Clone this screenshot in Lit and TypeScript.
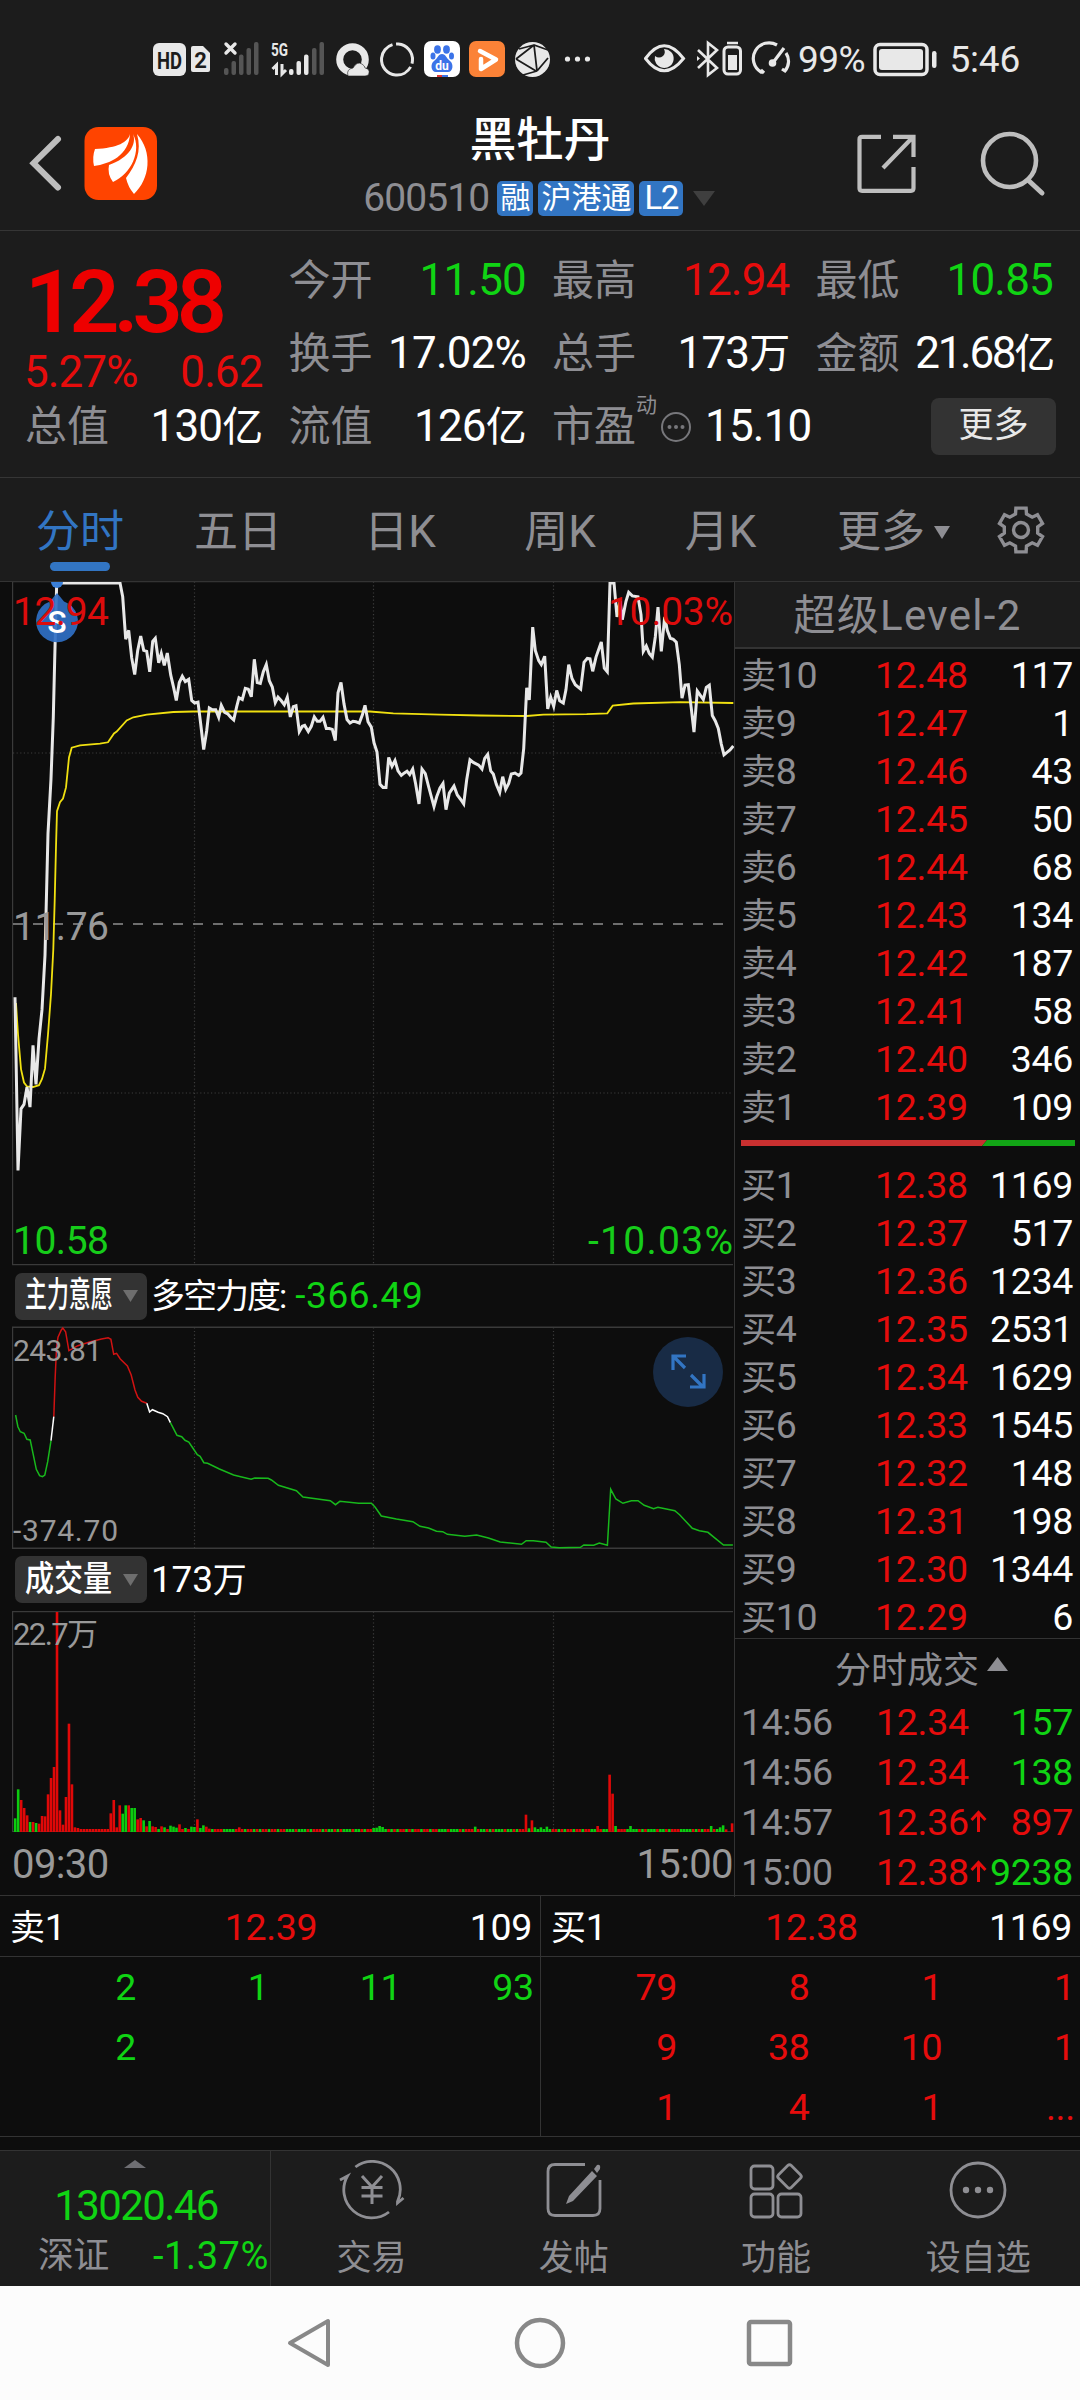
import { LitElement, html, svg, css } from "lit";
import { customElement } from "lit/decorators.js";

type Pair = [number, number];

const parse = (s: string): Pair[] =>
  s.trim().split(/\s+/).map((p) => p.split(",").map(Number) as Pair);

/* Series are stored as integers; each panel gives its own scale and origin. */
const path = (s: string, kx: number, ky: number, dx: number, dy: number) =>
  parse(s).map(([x, y]) => `${(x / kx + dx).toFixed(1)},${(y / ky + dy).toFixed(1)}`).join(" ");

const PRICE = `45,957 54,1345 63,1207 72,1197 81,1158 90,1203 99,1065 108,1152 117,1050 126,985 135,863 144,590 153,468 160,330 164,200 170,29
360,29 368,60 377,155 386,135 395,197 404,234 413,180 422,148 431,180 440,182 449,228 458,160 466,153 476,208 484,187 493,214 502,186 512,235
521,264 529,292 538,252 547,238 556,250 566,245 575,292 584,298 594,296 602,345 611,402 620,360 628,309 637,313 647,313 656,330 664,303
674,319 683,322 692,330 701,336 710,306 717,286 727,290 736,265 745,267 754,284 763,200 772,252 781,254 790,228 799,212 808,248 817,262
826,297 834,285 844,293 853,302 862,285 871,329 880,306 888,304 898,362 907,350 914,348 925,362 934,350 943,329 952,339 960,339 969,330
979,355 988,355 997,357 1006,382 1014,275 1023,252 1032,300 1041,335 1050,343 1059,339 1068,340 1078,343 1087,325 1095,303 1104,340
1114,352 1122,387 1131,408 1140,480 1149,487 1158,487 1166,420 1176,440 1185,427 1194,450 1204,460 1212,455 1221,451 1229,458 1238,446
1247,480 1257,524 1266,446 1276,456 1286,486 1302,530 1310,508 1320,488 1329,478 1338,537 1348,500 1362,484 1372,504 1382,514 1391,524
1400,470 1410,425 1420,431 1436,437 1446,446 1454,422 1463,413 1472,450 1480,457 1489,480 1499,498 1508,463 1517,491 1526,478 1534,457
1545,455 1556,460 1563,455 1571,400 1580,264 1588,291 1598,128 1606,180 1616,203 1624,212 1634,193 1643,311 1652,285 1661,305 1670,270
1679,293 1690,298 1698,268 1706,212 1716,243 1726,257 1742,267 1752,207 1762,198 1770,199 1778,227 1788,195 1804,161 1813,220 1822,228
1830,29 1842,29 1851,105 1860,70 1867,111 1878,70 1886,50 1897,58 1914,60 1923,100 1930,182 1939,170 1948,187 1957,195 1966,150 1974,83
1984,182 1994,105 2002,135 2011,153 2020,155 2029,162 2038,212 2046,287 2055,258 2065,257 2074,310 2082,363 2092,271 2102,282 2110,290
2119,263 2128,258 2137,326 2146,338 2155,355 2164,390 2172,414 2182,408 2190,403 2200,394`;

const AVERAGE = `48,970 54,1040 63,1118 72,1148 81,1157 99,1158 117,1154 126,1140 135,1117 144,1040 153,950 160,850 164,740 168,620 171,540
180,520 189,512 198,487 207,420 215,398 240,393 300,389 324,386 342,366 350,362 380,337 400,330 440,324 520,318 580,317 1110,317 1180,321
1320,324 1440,326 1580,327 1630,324 1760,323 1822,321 1838,304 1900,299 2040,296 2200,298`;

const FORCE: Array<[string, string]> = [
  ["up", "114,470 117,350 120,260 123,232 130,210 133,204 139,215 146,272 165,257 190,246 215,237 229,233 235,238 241,283 247,280 255,297 270,318 278,345 286,390 292,412 300,424 311,430"],
  ["down", "33,465 38,500 43,515 51,520 57,538 64,540 70,580 77,628 84,647 90,650 95,645 101,605 108,542"],
  ["even", "108,542 114,470"],
  ["even", "311,430 317,456 323,449 335,457 345,461 355,470 361,488"],
  ["down", `361,488 375,526 385,530 392,541 400,546 410,567 418,584 424,589 432,608 440,610 465,627 495,645 510,650 532,658 540,654 568,655
575,660 590,676 628,692 642,711 700,722 711,734 720,724 760,730 787,730 795,742 808,768 840,777 875,785 890,799 908,804 925,814 938,815
948,823 985,829 1010,825 1035,834 1060,846 1105,853 1115,842 1130,842 1157,847 1168,861 1185,863 1230,862 1237,855 1258,856 1270,849
1287,856 1294,688 1305,717 1320,730 1338,722 1352,722 1365,736 1385,746 1394,742 1430,752 1440,764 1467,805 1482,812 1500,817 1533,855 1553,855`],
];

/* Opening minutes in full, then only the minutes that stand out. */
const OPENING = `g41 g128 r96 r72 r50 g30 r30 g27 r25 r48 r47 r113 r162 r195 r660 r65 r22 r105 r325 r143 r14 r12 r9 r9 r9 r9 r9 r9 r9 r9 r9 r9
r56 r96 r14 r80 g55 g80 r80 g72 g72 r38 r42 g35 r17 g33 r17 r15 g9 r17 g14 r9 g19 g16 g13 r23 r9 g12 r9 g16 g15 r38 g12 g20 r16 r10`.split(/\s+/);
const PEAKS: Record<number, string> = {
  75: "r14", 120: "g12", 121: "g13", 122: "g18", 123: "g15", 154: "g16", 171: "r52", 172: "g11", 173: "r35", 174: "g14",
  176: "g14", 178: "g16", 195: "r18", 199: "r172", 200: "r115", 201: "g18", 206: "g18", 233: "g18", 236: "g14", 237: "g20", 238: "r8", 239: "r0", 240: "r26",
};
const QUIET = "rgrggrgrgggrggrgrrrggggrgrgrrgrgrrgrrgrrgggrgggrgrr";
const VOLUME = Array.from({ length: 241 }, (_, i) => OPENING[i] ?? PEAKS[i] ?? QUIET[i % QUIET.length] + "9");

const SELL = [["卖10", "12.48", "117"], ["卖9", "12.47", "1"], ["卖8", "12.46", "43"], ["卖7", "12.45", "50"], ["卖6", "12.44", "68"],
  ["卖5", "12.43", "134"], ["卖4", "12.42", "187"], ["卖3", "12.41", "58"], ["卖2", "12.40", "346"], ["卖1", "12.39", "109"]];
const BUY = [["买1", "12.38", "1169"], ["买2", "12.37", "517"], ["买3", "12.36", "1234"], ["买4", "12.35", "2531"], ["买5", "12.34", "1629"],
  ["买6", "12.33", "1545"], ["买7", "12.32", "148"], ["买8", "12.31", "198"], ["买9", "12.30", "1344"], ["买10", "12.29", "6"]];
const TICKS = [["14:56", "12.34", "", "157", "down"], ["14:56", "12.34", "", "138", "down"], ["14:57", "12.36", "1", "897", "up"], ["15:00", "12.38", "1", "9238", "down"]];

const base = css`
  :host { display: block; font-family: Roboto, "Noto Sans CJK SC", sans-serif; color: #fff; }
  * { box-sizing: border-box; }
  svg { display: block; flex: none; }
  .up { color: #e60c0c; }
  .down { color: #10d414; }
  .muted { color: #8e8e93; }
`;

@customElement("status-bar")
class StatusBar extends LitElement {
  static styles = [base, css`
    .bar { display: flex; align-items: center; height: 100px; padding: 18px 60px 0 153px; color: #e8e8e8; font-size: 37px; }
    .alerts { margin-right: 54px; }
    .pct { width: 75px; padding-left: 4px; letter-spacing: -0.6px; }
    .clock { padding-left: 12px; letter-spacing: -0.2px; }
  `];
  render() {
    return html`<div class="bar">
      <svg class="alerts" width="437" height="40" viewBox="153 39 437 40" fill="#e8e8e8">
        <rect x="153" y="43" width="33" height="33" rx="6"/>
        <text x="169.500" y="68.500" font-size="23" font-weight="700" text-anchor="middle" fill="#1c1c1c" textLength="25" lengthAdjust="spacingAndGlyphs">HD</text>
        <path d="M193 46h10l7 7v17q0 2-2 2h-15q-2 0-2-2v-22q0-2 2-2z"/>
        <text x="200.500" y="68" font-size="22" font-weight="700" text-anchor="middle" fill="#1c1c1c">2</text>
        <path d="M226 44l9 9m0-9l-9 9" stroke="#e8e8e8" stroke-width="3.400" stroke-linecap="round"/>
        <g fill="#555"><rect x="224" y="68" width="4.500" height="7" rx="2"/><rect x="231.500" y="61" width="4.500" height="14" rx="2"/><rect x="239" y="54.500" width="4.500" height="20.500" rx="2"/><rect x="246.500" y="48" width="4.500" height="27" rx="2"/><rect x="254" y="42" width="4.500" height="33" rx="2"/></g>
        <text x="271" y="56" font-size="19" font-weight="700" textLength="17" lengthAdjust="spacingAndGlyphs">5G</text>
        <path d="M276.500 75V65l-4 4M282 64v10l4-4" fill="none" stroke="#e8e8e8" stroke-width="3"/>
        <rect x="289" y="69" width="4.500" height="6" rx="2"/><rect x="296.500" y="61" width="4.500" height="14" rx="2"/><rect x="304" y="54.500" width="4.500" height="20.500" rx="2"/>
        <g fill="#555"><rect x="312" y="48" width="4.500" height="27" rx="2"/><rect x="319.500" y="42" width="4.500" height="33" rx="2"/></g>
        <circle cx="352.500" cy="59.500" r="12.800" fill="none" stroke="#e8e8e8" stroke-width="7"/>
        <path d="M348 76q-2-7 5-8 4-7 9-4 3 2 3 4 5 1 4 5 0 3-4 3z" stroke="#1c1c1c" stroke-width="0.600"/>
        <circle cx="397" cy="59.500" r="15.500" fill="none" stroke="#e8e8e8" stroke-width="3" stroke-dasharray="27 3.500 60.400 3.500 3 0" transform="rotate(-85 397 59.500)"/>
        <rect x="424" y="41" width="36" height="36" rx="7" fill="#fff"/>
        <g fill="#3b73e8"><ellipse cx="437.500" cy="49.500" rx="3.400" ry="4.200"/><ellipse cx="446.500" cy="49.500" rx="3.400" ry="4.200"/><ellipse cx="433" cy="56" rx="2.500" ry="3.500"/><ellipse cx="451.500" cy="56" rx="2.500" ry="3.500"/><path d="M442 54c4 0 4 4 8 7s3 11-2 11h-12c-5 0-6-8-2-11s4-7 8-7z"/></g>
        <text x="442" y="70" font-size="12" font-weight="700" fill="#fff" text-anchor="middle">du</text>
        <path d="M437 75h5v2h-5z" fill="#d33"/><path d="M442 75h6v2h-6z" fill="#3b73e8"/>
        <rect x="469" y="41" width="36" height="36" rx="7" fill="#fb8237"/>
        <path d="M480 51l16 8.500-15 9.500V59" fill="none" stroke="#fff" stroke-width="4.500" stroke-linejoin="round" stroke-linecap="round"/>
        <circle cx="532.500" cy="59.500" r="17.500"/>
        <path d="M516 59l18-14 14 5m-32 9l20 12m-2-26l3 26m11-13l-11 13m-14 4l14-4M519 49l15-4" stroke="#1c1c1c" stroke-width="1.800" fill="none"/>
        <circle cx="567.500" cy="59" r="2.600"/><circle cx="577.500" cy="59" r="2.600"/><circle cx="587.500" cy="59" r="2.600"/>
      </svg>
      <svg width="150" height="40" viewBox="644 39 150 40" fill="none" stroke="#e8e8e8" stroke-width="3">
        <path d="M645.500 58.500Q664 33 683.500 58.500 664 83 645.500 58.500z"/>
        <path d="M664 49a9.500 9.500 0 1 1-9 7q4 3 8 0 3-3 1-7z" fill="#e8e8e8" stroke="none"/>
        <path d="M698 50l19 18-9 7V43l9 7-19 18" stroke-width="2.600"/>
        <path d="M697 56l3 2.500-3 2.500z" fill="#e8e8e8" stroke="none"/>
        <rect x="724" y="47" width="16.500" height="27" rx="4"/><path d="M727 43h11" stroke-width="2.500"/><path d="M728 55h9v15h-9z" fill="#e8e8e8" stroke="none"/>
        <path d="M764 73l-2-2-1 1A15 15 0 0 1 777 45M786 53a15 15 0 0 1-1 18l-3-2M772 64l12-16" stroke-width="3.200"/><circle cx="772.500" cy="63" r="3.800" fill="#e8e8e8" stroke="none"/>
      </svg>
      <span class="pct">99%</span>
      <svg width="70" height="40" viewBox="868 39 70 40"><rect x="876" y="44.500" width="52" height="30" rx="5" fill="none" stroke="#e8e8e8" stroke-width="3.500"/><rect x="880" y="49" width="44" height="21" rx="3" fill="#e8e8e8"/><rect x="933" y="51" width="4.500" height="17" rx="2.200" fill="#e8e8e8"/></svg>
      <span class="clock">5:46</span>
    </div>`;
  }
}

@customElement("stock-header")
class StockHeader extends LitElement {
  static styles = [base, css`
    .head { display: flex; height: 131px; border-bottom: 1px solid #353535; }
    .side { width: 330px; padding: 24px 0 0 27px; }
    .mid { flex: 1; display: flex; flex-direction: column; align-items: center; }
    .name { height: 78px; line-height: 78px; font-size: 47px; font-weight: 500; padding-top: 1px; }
    .code { display: flex; align-items: center; height: 40px; margin-left: -2px; }
    .num { font-size: 39px; letter-spacing: -0.9px; margin-right: 8px; }
    .tag { height: 35px; line-height: 34px; border-radius: 5px; background: #3275c3; margin-right: 5px; padding: 0 3px; font-size: 30px; }
    .l2 { padding: 0 5px; font-size: 33px; letter-spacing: -1.5px; margin-right: 10px; }
    .right { width: 330px; padding: 30px 0 0 104px; }
  `];
  render() {
    return html`<div class="head">
      <div class="side"><svg width="134" height="80" viewBox="27 124 134 80">
        <path d="M58 139L33.500 163.200 58 187.500" fill="none" stroke="#bebebe" stroke-width="6" stroke-linecap="round"/>
        <rect x="84.500" y="127" width="72.500" height="73" rx="14" fill="#ff4400"/>
        <g fill="#fff"><path d="M130 134C128 142 118 148 95 149q-3 8-1 17c16-2 35-11 36-32z"/><path d="M133 134c4 10-4 24-24 31q-2 9 4 17c18-8 29-31 20-48z"/><path d="M137 134c5 17-1 31-11 44q2 9 8 16c16-15 19-42 3-60z"/></g>
      </svg></div>
      <div class="mid">
        <div class="name">黑牡丹</div>
        <div class="code"><span class="num muted">600510</span><span class="tag">融</span><span class="tag">沪港通</span><span class="tag l2">L2</span>
          <svg width="22" height="15" viewBox="0 0 22 15"><path d="M0 0h22L11 15z" fill="#3f3f3f"/></svg></div>
      </div>
      <div class="right"><svg width="196" height="68" viewBox="854 130 196 68" fill="none" stroke="#bebebe" stroke-width="4.200">
        <path d="M881 136.800h-19q-2.500 0-2.500 2.500v49q0 2.500 2.500 2.500h49q2.500 0 2.500-2.500V167M893 136.800h20.500V157M912 138L883 168"/>
        <circle cx="1009.500" cy="160.500" r="26.500" stroke-width="4.600"/><path d="M1028 180l14 13" stroke-width="5" stroke-linecap="round"/>
      </svg></div>
    </div>`;
  }
}

@customElement("quote-stats")
class QuoteStats extends LitElement {
  static styles = [base, css`
    .grid { display: grid; grid-template-columns: repeat(4, 236.500px); grid-auto-rows: 73px; column-gap: 27px; height: 247px; padding: 12.500px 0 0 26px; border-bottom: 1px solid #353535; font-size: 44px; line-height: 73px; }
    .main { grid-row: span 2; }
    .last { font-size: 88px; font-weight: 600; line-height: 115px; letter-spacing: -6px; color: #ee0000; margin-left: -1px; }
    .row { display: flex; justify-content: space-between; white-space: nowrap; }
    .chg { line-height: 26px; letter-spacing: -0.9px; margin-left: -2px; }
    .label { font-size: 42px; color: #8e8e93; margin-left: -1px; }
    .val { letter-spacing: -0.8px; }
    .tight { letter-spacing: -2.300px; }
    .val i { font-style: normal; font-size: 41px; }
    .pe { justify-content: flex-start; align-items: center; }
    .sup { font-size: 21px; line-height: 24px; align-self: flex-start; margin: 3px 3px 0 0; color: #8e8e93; }
    .q { margin: 1px 13px 0 0; }
    .more { justify-self: end; align-self: center; width: 125px; height: 57px; margin-right: -3px; border-radius: 8px; background: #333; font-size: 35px; line-height: 55px; text-align: center; color: #e8e8e8; }
  `];
  cell(label: string, value: string, unit = "", tone = "") {
    return html`<div class="row"><span class="label">${label}</span><span class="val ${tone}">${value}<i>${unit}</i></span></div>`;
  }
  render() {
    return html`<div class="grid">
      <div class="main"><div class="last">12.38</div><div class="row chg up"><span>5.27%</span><span>0.62</span></div></div>
      ${this.cell("今开", "11.50", "", "down")}${this.cell("最高", "12.94", "", "up")}${this.cell("最低", "10.85", "", "down")}
      ${this.cell("换手", "17.02%")}${this.cell("总手", "173", "万")}${this.cell("金额", "21.68", "亿", "tight")}
      ${this.cell("总值", "130", "亿")}${this.cell("流值", "126", "亿")}
      <div class="row pe"><span class="label">市盈</span><span class="sup">动</span>
        <svg class="q" width="32" height="32" viewBox="0 0 32 32"><circle cx="16" cy="16" r="14" fill="none" stroke="#77777b" stroke-width="2"/><g fill="#77777b"><circle cx="9.500" cy="16" r="2"/><circle cx="16" cy="16" r="2"/><circle cx="22.500" cy="16" r="2"/></g></svg>
        <span class="val">15.10</span></div>
      <div class="more">更多</div>
    </div>`;
  }
}

@customElement("period-tabs")
class PeriodTabs extends LitElement {
  static styles = [base, css`
    .tabs { display: grid; grid-template-columns: 157px 162px 162px 158px 163px 163px 1fr; height: 103px; padding-top: 17px; color: #8e8e93; font-size: 44px; line-height: 74px; }
    .tab { text-align: center; }
    .on { color: #3275c3; display: flex; flex-direction: column; align-items: center; margin-left: 3px; }
    .on::after { content: ""; width: 60px; height: 9px; margin-top: -7px; border-radius: 5px; background: #3275c3; }
    .drop { display: flex; align-items: center; height: 74px; padding-left: 35px; gap: 9px; }
    .gear { margin: 10px 0 0 31px; }
  `];
  render() {
    const teeth = Array.from({ length: 6 }, (_, i) => {
      const at = (deg: number, r: number) => {
        const a = ((i * 60 + deg - 90) * Math.PI) / 180;
        return `${(25 + r * Math.cos(a)).toFixed(1)},${(25 + r * Math.sin(a)).toFixed(1)}`;
      };
      return [at(-13, 22.5), at(13, 22.5), at(19, 17), at(41, 17)].join(" ");
    }).join(" ");
    return html`<div class="tabs">
      <div class="tab on">分时</div><div class="tab">五日</div><div class="tab">日K</div><div class="tab">周K</div><div class="tab">月K</div>
      <div class="drop">更多<svg width="16" height="13" viewBox="0 0 16 13"><path d="M0 0h16L8 13z" fill="#8e8e93"/></svg></div>
      <svg class="gear" width="50" height="50" viewBox="0 0 50 50" fill="none" stroke="#8e8e93" stroke-width="3.400"><polygon points=${teeth}/><circle cx="25" cy="25" r="7.500"/></svg>
    </div>`;
  }
}

@customElement("stock-charts")
class StockCharts extends LitElement {
  static styles = [base, css`
    .wrap { width: 734px; padding-left: 12px; }
    text { font-family: Roboto, "Noto Sans CJK SC", sans-serif; }
    .line { display: flex; align-items: center; height: 60px; padding-left: 3px; font-size: 37px; line-height: 46px; }
    .line.vol { height: 61px; padding-bottom: 2px; }
    .pick { display: flex; align-items: center; width: 132px; height: 47px; margin-right: 4px; border-radius: 7px; background: #333; padding: 0 9px 0 10px; font-size: 35px; font-weight: 500; }
    .pick span { display: block; width: 98px; white-space: nowrap; transform-origin: left center; }
    .narrow { transform: scaleX(0.625); }
    .mid { transform: scaleX(0.83); }
    .cn { font-size: 34px; letter-spacing: -2px; margin-right: 10px; }
    .val { letter-spacing: -0.2px; }
    .force { letter-spacing: 0.6px; }
    .val i { font-style: normal; font-size: 34px; }
    .axis { display: flex; justify-content: space-between; height: 63px; line-height: 66px; font-size: 40px; color: #999; letter-spacing: -0.6px; padding: 0 1px 0 0; }
    .dots { stroke: #3c3c3c; stroke-width: 1.200; stroke-dasharray: 1.200 2.400; }
    .s-up { stroke: #d01212; }
    .s-down { stroke: #18b81c; }
    .s-even { stroke: #fff; }
  `];
  frame(top: number, bottom: number) {
    return svg`<path d="M733 ${top}H12.500V${bottom}H733" fill="none" stroke="#3a3a3a" stroke-width="1.400"/>
      ${[194.5, 373.5, 553.5].map((x) => svg`<path class="dots" d="M${x} ${top}V${bottom}"/>`)}`;
  }
  pick(text: string, cls: string) {
    return html`<div class="pick"><span class=${cls}>${text}</span><svg width="15" height="12" viewBox="0 0 15 12"><path d="M0 0h15L7.500 12z" fill="#6e6e6e"/></svg></div>`;
  }
  render() {
    return html`<div class="wrap">
      <svg width="722" height="684" viewBox="12 582 722 684">
        ${this.frame(581.6, 1264.6)}
        <path class="dots" d="M13 753H733M13 1093H733"/>
        <path d="M13 924H733" stroke="#8e8e8e" stroke-width="1.600" stroke-dasharray="10 10"/>
        <polyline points=${path(AVERAGE, 3, 2.24, 0, 570)} fill="none" stroke="#f0e010" stroke-width="1.800"/>
        <polyline points=${path(PRICE, 3, 2.24, 0, 570)} fill="none" stroke="#e8e8e8" stroke-width="3"/>
        <circle cx="57" cy="582" r="6" fill="#3a7fd8"/>
        <path d="M57 593l7 8.500a21 21 0 1 1-14 0z" fill="#2f6fc4" fill-opacity="0.920"/>
        <text x="57" y="632.500" font-size="32" font-weight="500" fill="#fff" text-anchor="middle">S</text>
        <g font-size="39">
          <text x="13" y="624.500" fill="#dc0c0c" textLength="96">12.94</text>
          <text x="733" y="624.500" fill="#dc0c0c" text-anchor="end" textLength="125">10.03%</text>
          <text x="13" y="939.500" fill="#999" textLength="96">11.76</text>
          <text x="13" y="1254" fill="#16cc1a" textLength="96">10.58</text>
          <text x="733" y="1254" fill="#16cc1a" text-anchor="end" textLength="145">-10.03%</text>
        </g>
      </svg>
      <div class="line">${this.pick("主力意愿", "narrow")}<span class="cn">多空力度:</span><span class="force down">-366.49</span></div>
      <svg width="722" height="224" viewBox="12 1326 722 224">
        ${this.frame(1327.3, 1548.3)}
        <g fill="none" stroke-width="1.500">${FORCE.map(([c, s]) => svg`<polyline class="s-${c}" points=${path(s, 2.119, 3, 0, 1260)}/>`)}</g>
        <text x="13" y="1361" font-size="30" fill="#999" textLength="89">243.81</text>
        <text x="13" y="1541" font-size="30" fill="#999" textLength="105">-374.70</text>
        <circle cx="688" cy="1372" r="35" fill="#182b45"/>
        <path d="M685 1368l-12-12m13 0h-13v14M691 1375l12 12m-13 0h14v-13" fill="none" stroke="#3275c3" stroke-width="3.200"/>
      </svg>
      <div class="line vol">${this.pick("成交量", "mid")}<span class="val">173<i>万</i></span></div>
      <svg width="722" height="221" viewBox="12 1611 722 221">
        ${this.frame(1611.6, 1831.6)}
        ${VOLUME.map((v, i) => {
          const h = Number(v.slice(1)) / 3;
          return svg`<rect x=${13.9 + i * 2.987} y=${1832 - h} width="2.600" height=${h} fill=${v[0] === "r" ? "#e00808" : "#0ccc10"}/>`;
        })}
        <text x="13" y="1645" font-size="31" fill="#999" textLength="85">22.7万</text>
      </svg>
      <div class="axis"><span>09:30</span><span>15:00</span></div>
    </div>`;
  }
}

@customElement("order-book")
class OrderBook extends LitElement {
  static styles = [base, css`
    .book { width: 346px; border-left: 1px solid #333; }
    .title { height: 67px; line-height: 68px; border-bottom: 2px solid #333; background: #1c1c1c; color: #8e8e93; font-size: 42px; letter-spacing: 1.300px; text-align: center; }
    .rows { padding-top: 2px; }
    .row { display: grid; grid-template-columns: 134px 98px 1fr; height: 48px; line-height: 48px; padding: 0 7px 0 6px; font-size: 37.500px; letter-spacing: -0.3px; }
    .row span:last-child { text-align: right; }
    .row b { font-weight: 400; font-size: 35px; }
    .ratio { display: block; margin: 9px 0 15px 6px; }
    .deals { display: flex; justify-content: center; align-items: center; gap: 8px; height: 59px; margin-top: -3px; padding: 0 0 3px 28px; border-top: 1px solid #333; font-size: 36px; color: #8e8e93; }
    .deals svg { margin-bottom: 6px; }
    .tick { height: 50px; line-height: 50px; grid-template-columns: 135px 94px 18px 1fr; }
    .tick svg { margin-top: 13px; }
    .tick span:last-child { margin-left: -12px; }
  `];
  level = ([n, p, q]: string[]) => html`<div class="row"><span class="muted"><b>${n[0]}</b>${n.slice(1)}</span><span class="up">${p}</span><span>${q}</span></div>`;
  render() {
    return html`<div class="book">
      <div class="title">超级Level-2</div>
      <div class="rows">${SELL.map(this.level)}</div>
      <svg class="ratio" width="334" height="6" viewBox="0 0 334 6"><path d="M0 0h246l-5 6H0z" fill="#c93030"/><path d="M246 0h88v6h-93z" fill="#12a516"/></svg>
      <div>${BUY.map(this.level)}</div>
      <div class="deals">分时成交<svg width="21" height="14" viewBox="0 0 21 14"><path d="M10.500 0L21 14H0z" fill="#8e8e93"/></svg></div>
      ${TICKS.map(([t, p, a, q, tone]) => html`<div class="row tick"><span class="muted">${t}</span><span class="up">${p}</span>
        <svg width="17" height="24" viewBox="0 0 17 24">${a ? svg`<path d="M8.500 22V3M1.500 10l7-7.500 7 7.500" fill="none" stroke="#e60c0c" stroke-width="3"/>` : ""}</svg>
        <span class=${tone}>${q}</span></div>`)}
    </div>`;
  }
}

@customElement("queue-table")
class QueueTable extends LitElement {
  static styles = [base, css`
    .table { display: grid; grid-template-columns: 541px 539px; height: 242px; border-top: 1px solid #333; border-bottom: 1px solid #333; font-size: 37.500px; letter-spacing: -0.3px; }
    .half:first-child { border-right: 1px solid #333; }
    .top { display: grid; grid-template-columns: 1fr 1fr 1fr; height: 61px; line-height: 63px; padding: 0 8px 0 10px; border-bottom: 1px solid #333; }
    .top span:nth-child(2) { text-align: center; }
    .top span:last-child { text-align: right; }
    .top b { font-weight: 400; font-size: 35px; }
    .cells { display: grid; grid-template-columns: 136px repeat(3, 132.600px); grid-auto-rows: 60px; line-height: 61px; text-align: right; }
  `];
  half(cls: string, name: string, price: string, qty: string, cells: string[]) {
    return html`<div class="half"><div class="top"><span><b>${name[0]}</b>${name[1]}</span><span class="up">${price}</span><span>${qty}</span></div>
      <div class="cells ${cls}">${cells.map((c) => html`<span>${c}</span>`)}</div></div>`;
  }
  render() {
    return html`<div class="table">
      ${this.half("down", "卖1", "12.39", "109", ["2", "1", "11", "93", "2"])}
      ${this.half("up", "买1", "12.38", "1169", ["79", "8", "1", "1", "9", "38", "10", "1", "1", "4", "1", "..."])}
    </div>`;
  }
}

@customElement("bottom-bar")
class BottomBar extends LitElement {
  static styles = [base, css`
    .bar { display: grid; grid-template-columns: 271px repeat(4, 202.250px); height: 136px; background: #1c1c1c; border-top: 1px solid #333; }
    .index { border-right: 1px solid #333; padding-top: 9px; }
    .index svg { margin: 0 auto; }
    .pts { margin-top: 18px; height: 40px; line-height: 40px; font-size: 42px; text-align: center; letter-spacing: -1.600px; padding-left: 2px; }
    .sub { display: flex; justify-content: space-between; height: 60px; line-height: 60px; padding: 0 1px 0 38px; font-size: 38px; letter-spacing: 0.6px; }
    .sub .muted { font-size: 36px; letter-spacing: -0.8px; }
    .act { display: flex; flex-direction: column; align-items: center; padding-top: 9px; color: #8e8e93; font-size: 35px; line-height: 50px; margin-left: -1px; }
    .act svg { margin-bottom: 14px; }
    .nav { display: flex; align-items: center; justify-content: center; gap: 178px; height: 114px; background: #fcfcfc; }
  `];
  act(label: string, icon: unknown) {
    return html`<div class="act"><svg width="66" height="60" viewBox="0 0 66 60" fill="none" stroke="#8e8e93" stroke-width="2.800">${icon}</svg>${label}</div>`;
  }
  render() {
    return html`<div class="bar">
      <div class="index"><svg width="22" height="8" viewBox="0 0 22 8"><path d="M11 0l11 8H0z" fill="#6e6e72"/></svg>
        <div class="pts down">13020.46</div><div class="sub"><span class="muted">深证</span><span class="down">-1.37%</span></div></div>
      ${this.act("交易", svg`<path d="M16.400 7A28 28 0 0 1 58.500 41.500V43l6-5M50 52A28 28 0 0 1 8.500 16L1 20"/><path d="M23 16l10 11 10-11M33 27v17M22.500 27.500h21M22.500 36h21" stroke-width="3"/>`)}
      ${this.act("发帖", svg`<path d="M44 4.500H14q-7 0-7 7v37q0 7 7 7h38q7 0 7-7V20"/><path d="M51 11l5 5-24 25-7 3 3-8zM53 9l3-4q4-1 3 4l-3 4z" fill="#8e8e93" stroke="none"/>`)}
      ${this.act("功能", svg`<rect x="8" y="6" width="22" height="23" rx="3.500"/><rect x="8" y="34" width="22" height="23" rx="3.500"/><rect x="35" y="34" width="23" height="23" rx="3.500"/><rect x="37.500" y="7.500" width="18" height="18" rx="2.500" transform="rotate(45 46.500 16.500)"/>`)}
      ${this.act("设自选", svg`<circle cx="33" cy="30" r="27"/><g fill="#8e8e93" stroke="none"><circle cx="21" cy="30" r="3.200"/><circle cx="33" cy="30" r="3.200"/><circle cx="45" cy="30" r="3.200"/></g>`)}
    </div>
    <div class="nav">
      <svg width="50" height="54" viewBox="1 0 50 54"><path d="M44 5v44L6 27z" fill="none" stroke="#888" stroke-width="4" stroke-linejoin="round"/></svg>
      <svg width="54" height="54" viewBox="0 0 54 54"><circle cx="27" cy="27" r="23" fill="none" stroke="#888" stroke-width="4.500"/></svg>
      <svg width="50" height="54" viewBox="0 0 50 54"><rect x="4" y="6" width="41" height="42" rx="2" fill="none" stroke="#888" stroke-width="4.500"/></svg>
    </div>`;
  }
}

@customElement("app-root")
class AppRoot extends LitElement {
  static styles = [base, css`
    :host { width: 1080px; height: 2400px; background: #0d0d0d; overflow: hidden; }
    .top { background: #1c1c1c; height: 581px; }
    .body { display: flex; height: 1314px; border-top: 1px solid #333; }
    .gap { height: 13px; }
  `];
  render() {
    return html`
      <div class="top">
        <status-bar></status-bar><stock-header></stock-header><quote-stats></quote-stats><period-tabs></period-tabs>
      </div>
      <div class="body"><stock-charts></stock-charts><order-book></order-book></div>
      <queue-table></queue-table>
      <div class="gap"></div>
      <bottom-bar></bottom-bar>`;
  }
}
